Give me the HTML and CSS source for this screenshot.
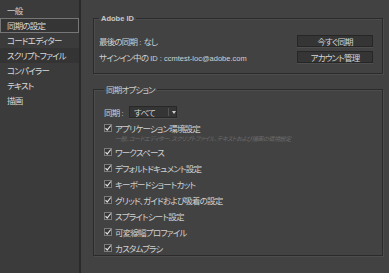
FILE: index.html
```html
<!DOCTYPE html>
<html lang="ja">
<head>
<meta charset="utf-8">
<link rel="stylesheet" href="styles.css">
</head>
<body>
<div class="app">
  <nav class="side">
    <div class="item">一般</div>
    <div class="item selected">同期の設定</div>
    <div class="item">コードエディター</div>
    <div class="item hover">スクリプトファイル</div>
    <div class="item">コンパイラー</div>
    <div class="item">テキスト</div>
    <div class="item">描画</div>
  </nav>
  <main class="main">
    <fieldset class="group group-id">
      <legend class="legend lat-b">Adobe ID</legend>
      <div class="row">
        <span class="label">最後の同期<span class="lat"> : </span>なし</span>
        <button class="btn">今すぐ同期</button>
      </div>
      <div class="row">
        <span class="label">サインイン中の<span class="lat"> ID : ccmtest-loc@adobe.com</span></span>
        <button class="btn">アカウント管理</button>
      </div>
    </fieldset>
    <fieldset class="group group-opt">
      <legend class="legend">同期オプション</legend>
      <div class="sync-row">
        <span class="sync-label">同期<span class="lat"> :</span></span>
        <div class="select">
          <span class="select-text">すべて</span>
          <span class="select-div"></span>
          <span class="select-arrow"></span>
        </div>
      </div>
      <div class="check first"><span class="box"><svg viewBox="0 0 8 8" width="8" height="8"><path d="M1.5 4.2 L3.2 6 L6.8 1.5" fill="none" stroke="#e0e0e0" stroke-width="1.2"/></svg></span>アプリケーション環境設定</div>
      <div class="desc">一般、コードエディター、スクリプトファイル、テキストおよび描画の環境設定</div>
      <div class="check"><span class="box"><svg viewBox="0 0 8 8" width="8" height="8"><path d="M1.5 4.2 L3.2 6 L6.8 1.5" fill="none" stroke="#e0e0e0" stroke-width="1.2"/></svg></span>ワークスペース</div>
      <div class="check"><span class="box"><svg viewBox="0 0 8 8" width="8" height="8"><path d="M1.5 4.2 L3.2 6 L6.8 1.5" fill="none" stroke="#e0e0e0" stroke-width="1.2"/></svg></span>デフォルトドキュメント設定</div>
      <div class="check"><span class="box"><svg viewBox="0 0 8 8" width="8" height="8"><path d="M1.5 4.2 L3.2 6 L6.8 1.5" fill="none" stroke="#e0e0e0" stroke-width="1.2"/></svg></span>キーボードショートカット</div>
      <div class="check"><span class="box"><svg viewBox="0 0 8 8" width="8" height="8"><path d="M1.5 4.2 L3.2 6 L6.8 1.5" fill="none" stroke="#e0e0e0" stroke-width="1.2"/></svg></span>グリッド、ガイドおよび吸着の設定</div>
      <div class="check"><span class="box"><svg viewBox="0 0 8 8" width="8" height="8"><path d="M1.5 4.2 L3.2 6 L6.8 1.5" fill="none" stroke="#e0e0e0" stroke-width="1.2"/></svg></span>スプライトシート設定</div>
      <div class="check"><span class="box"><svg viewBox="0 0 8 8" width="8" height="8"><path d="M1.5 4.2 L3.2 6 L6.8 1.5" fill="none" stroke="#e0e0e0" stroke-width="1.2"/></svg></span>可変線幅プロファイル</div>
      <div class="check"><span class="box"><svg viewBox="0 0 8 8" width="8" height="8"><path d="M1.5 4.2 L3.2 6 L6.8 1.5" fill="none" stroke="#e0e0e0" stroke-width="1.2"/></svg></span>カスタムブラシ</div>
    </fieldset>
  </main>
</div>
</body>
</html>
```
FILE: styles.css
```css
html, body {
  margin: 0;
  padding: 0;
  background: #424242;
}
body {
  width: 389px;
  height: 273px;
  overflow: hidden;
  font-family: "Noto Sans CJK JP", "Liberation Sans", sans-serif;
  font-size: 8.5px;
  letter-spacing: -0.8px;
  font-feature-settings: "palt" 1;
  color: #d0d0d0;
}
.app {
  display: flex;
  height: 273px;
}
.side {
  width: 79px;
  flex: none;
  background: #3b3b3b;
  border-right: 2px solid #2a2a2a;
  padding-top: 3px;
  box-sizing: content-box;
}
.item {
  height: 15px;
  line-height: 15px;
  padding-left: 7px;
  color: #d8d8d8;
  white-space: nowrap;
  box-sizing: border-box;
}
.item.selected {
  border: 1px solid #767676;
  background: #353535;
  padding-left: 6px;
  line-height: 13px;
}
.item.hover {
  background: #343434;
}
.main {
  flex: 1;
  padding: 13px 6px 0 12px;
  background: #424242;
}
.group {
  margin: 0;
  border: 1px solid #2b2b2b;
  box-shadow: inset 1px 1px 0 #4c4c4c, 1px 1px 0 #4c4c4c;
  min-width: 0;
}
.legend {
  padding: 0 2px 0 2px;
  margin-left: 0;
  line-height: 11px;
  height: 11px;
  color: #cccccc;
}
.lat {
  font-family: "Liberation Sans", sans-serif;
  font-size: 7.5px;
  letter-spacing: 0;
  white-space: pre;
}
.lat-b {
  font-family: "Liberation Sans", sans-serif;
  font-size: 7.5px;
  letter-spacing: 0;
  font-weight: bold;
  color: #c8c8c8;
}
.group-id {
  padding: 11px 9px 10px 5px;
}
.row {
  display: flex;
  justify-content: space-between;
  align-items: center;
  height: 12px;
}
.row + .row {
  margin-top: 4px;
}
.label {
  white-space: nowrap;
}
.btn {
  width: 76px;
  height: 12px;
  padding: 0;
  background: #353535;
  border: 1px solid #262626;
  box-shadow: 0 1px 0 #4e4e4e;
  color: #d4d4d4;
  font-family: inherit;
  font-size: 8.5px;
  letter-spacing: -0.8px;
  line-height: 10px;
  font-feature-settings: "palt" 1;
}
.group-opt {
  margin-top: 10px;
  padding: 11px 9px 5px 10px;
  height: 172px;
  box-sizing: border-box;
}
.sync-row {
  display: flex;
  align-items: center;
  height: 12px;
}
.sync-label {
  width: 25px;
}
.select {
  width: 48px;
  height: 12px;
  box-sizing: border-box;
  background: #353535;
  border: 1px solid #282828;
  box-shadow: 0 1px 0 #4e4e4e;
  display: flex;
  align-items: center;
}
.select-text {
  padding-left: 4px;
  width: 35px;
  line-height: 10px;
  color: #d4d4d4;
}
.select-div {
  width: 1px;
  height: 8px;
  background: #555;
}
.select-arrow {
  margin-left: 3px;
  width: 0;
  height: 0;
  border-left: 2.5px solid transparent;
  border-right: 2.5px solid transparent;
  border-top: 3px solid #d0d0d0;
}
.check {
  display: flex;
  align-items: center;
  height: 16px;
  white-space: nowrap;
}
.check.first {
  margin-top: 3px;
  height: 14px;
}
.box {
  width: 8px;
  height: 8px;
  box-sizing: border-box;
  border: 1px solid #7c7c7c;
  background: #383838;
  margin-right: 3px;
  display: flex;
  flex: none;
}
.box svg {
  margin: -1px;
  flex: none;
}
.desc {
  padding-left: 11px;
  font-size: 6px;
  letter-spacing: -0.4px;
  line-height: 7px;
  height: 7px;
  margin-bottom: 2px;
  font-style: italic;
  color: #6c6c6c;
  white-space: nowrap;
}
```
